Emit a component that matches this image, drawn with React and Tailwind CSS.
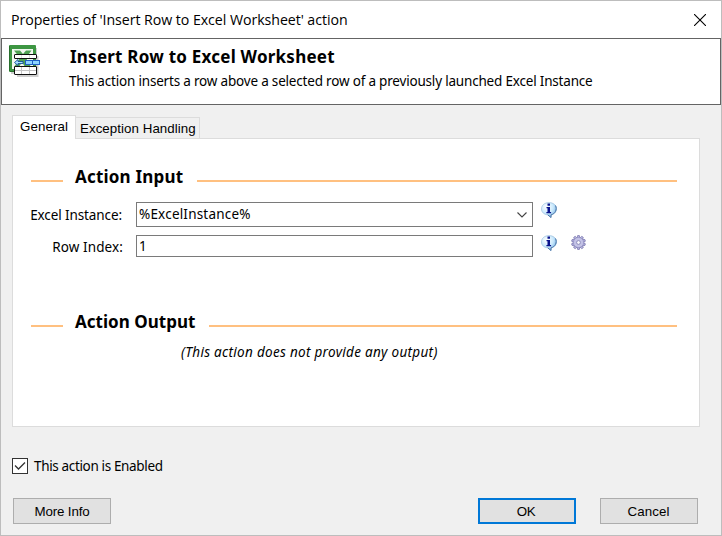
import React from "react";

const body = "block whitespace-pre font-['Noto_Sans',sans-serif] text-[13.5px] leading-[18px] ";
const ui = "block whitespace-pre font-['Liberation_Sans',Arial,sans-serif] text-[13.33px] leading-[16px] ";
const head = "block whitespace-pre font-['Noto_Sans',sans-serif] font-bold text-[17px] leading-[22px] ";

function ExcelIcon() {
  return (
    <svg width="34" height="34" viewBox="0 0 34 34" className="block">
      <path d="M28 3v8H29.500V32H8V29H2V27H27V3z" fill="#888" opacity=".4" />
      <rect width="27" height="27" rx="1" fill="#3d9642" />
      <path d="M0 1h1v25H0zM1 26h26v1H1z" fill="#286f2c" />
      <path d="M3 4h21v20H3z" fill="#f1f8f0" />
      <path d="M5 5.500h6l3 3.500 3-3.500h5.500L17 13l5 9h-6l-3-5-3 5H5l6-9z" fill="#4fa153" />
      <rect x="5.500" y="9.500" width="22" height="4" rx=".5" fill="#fff" stroke="#111" />
      <path d="M12.500 10v3M20.500 10v3" stroke="#ddd" />
      <rect x="5.500" y="21.500" width="22" height="8" rx=".5" fill="#fff" stroke="#111" />
      <path d="M6 25.500h21M12.500 22v7M20.500 22v7" stroke="#c4c4c4" />
      <path d="M5.500 17.500l3.500-3v2h5v2H9v2z" fill="#a8e2ff" stroke="#164f9d" strokeWidth=".9" />
      <rect x="16.500" y="15.500" width="14" height="4" fill="#8dd4ff" stroke="#1f5fc4" />
      <path d="M23.500 16v3" stroke="#1f5fc4" />
    </svg>
  );
}

function InfoIcon() {
  return (
    <svg width="17" height="17" viewBox="0 0 17 17" className="block">
      <defs>
        <radialGradient id="bubble" cx=".35" cy=".3" r=".8">
          <stop offset="0" stopColor="#fff" />
          <stop offset=".55" stopColor="#c9e8fc" />
          <stop offset="1" stopColor="#68a8e0" />
        </radialGradient>
      </defs>
      <path d="M8 .6c4.300 0 7.500 2.600 7.500 6.200 0 3.200-2.200 5.400-5.500 6v2.600l-3.200-2.500C3 12.500.5 10.200.5 6.900.5 3.200 3.700.6 8 .6z" fill="url(#bubble)" stroke="#9dc0dd" strokeWidth=".7" />
      <path d="M14.500 3.500c2 4-.5 8.500-4.500 9.400v2.600l-3.200-2.600" fill="none" stroke="#4b76a8" />
      <path d="M6.500 1.500h2.500v2.200H6.500zM5.500 5H9v5h1.100v1.300H5.400V10h1.100V6.300h-1z" fill="#08128c" />
    </svg>
  );
}

const teeth = [0, 36, 72, 108, 144, 180, 216, 252, 288, 324];

function GearIcon() {
  return (
    <svg width="16" height="16" viewBox="0 0 16 16" className="block">
      {teeth.map((angle) => (
        <path key={angle} d="M6.600.6h1.800l.5 2.400H6.100z" fill="#bdbbe2" stroke="#7875ae" strokeWidth=".8" transform={`rotate(${angle} 7.500 7.500)`} />
      ))}
      <circle cx="7.500" cy="7.500" r="5.100" fill="#c3c2e6" stroke="#918fc2" strokeWidth=".6" />
      <circle cx="7.500" cy="7.500" r="1.900" fill="#fafaff" stroke="#8583b5" strokeWidth=".9" />
    </svg>
  );
}

function Section({ title, className }) {
  return (
    <div className="flex h-5 items-start">
      <div className="mt-[14px] h-0.5 w-8 bg-[#ffc080]" />
      <h2 className={head + "ml-3 " + className}>{title}</h2>
      <div className="mt-[14px] h-0.5 flex-1 bg-[#ffc080]" />
    </div>
  );
}

export default function App() {
  return (
    <div className="flex h-[536px] w-[722px] flex-col border border-[#bdbdbd] bg-[#f0f0f0] text-black">
      <header className="flex h-[37px] shrink-0 items-center justify-between bg-white pr-[15px] pl-[10px]">
        <span className="font-['Open_Sans',sans-serif] text-[14.2px] tracking-[-0.06px] whitespace-pre">Properties of 'Insert Row to Excel Worksheet' action</span>
        <svg width="12" height="12" viewBox="0 0 12 12"><path d="M0 0l12 12M12 0L0 12" stroke="#000" strokeWidth="1.100" /></svg>
      </header>
      <div className="flex h-[67px] shrink-0 border border-[#646464] bg-white pl-[7px]">
        <div className="w-[60px] pt-[6px]"><ExcelIcon /></div>
        <div className="pt-[7px]">
          <h1 className={head + "pl-px tracking-[0.23px]"}>Insert Row to Excel Worksheet</h1>
          <p className={body + "mt-1 tracking-[-0.19px]"}>This action inserts a row above a selected row of a previously launched Excel Instance</p>
        </div>
      </div>

      <div className="mt-[10px] ml-[11px] flex h-[23px] items-end">
        <div className="z-10 -mb-px h-6 w-16 border border-b-0 border-[#dcdcdc] bg-white pt-[3px] pl-[7px]">
          <span className={ui + "tracking-[0.1px]"}>General</span>
        </div>
        <div className="h-[21px] w-[124px] border border-b-0 border-l-0 border-[#dcdcdc] pt-[3px] pl-1">
          <span className={ui + "tracking-[0.05px]"}>Exception Handling</span>
        </div>
      </div>

      <main className="ml-[11px] h-[289px] w-[688px] shrink-0 border border-[#dcdcdc] bg-white pt-[27px] pr-[22px] pl-[18px]">
        <Section title="Action Input" className="w-[122px] tracking-[0.2px]" />
        <div className="mt-4 flex h-[25px]">
          <label className={body + "mt-1 -ml-1 w-24 shrink-0 pr-px text-right tracking-[-0.1px]"}>Excel Instance:</label>
          <div className="ml-[13px] flex h-[25px] w-[397px] items-center justify-between border border-[#7a7a7a] pr-[5px] pb-[2px] pl-0.5">
            <span className={body + "tracking-[0.2px]"}>%ExcelInstance%</span>
            <svg width="10" height="6" viewBox="0 0 10 6" className="mt-0.5"><path d="M.5.5L5 5 9.500.5" fill="none" stroke="#444" strokeWidth="1.100" /></svg>
          </div>
          <div className="ml-2"><InfoIcon /></div>
        </div>
        <div className="mt-2 flex h-[22px]">
          <label className={body + "mt-[3px] w-[92px] shrink-0 text-right tracking-[0.1px]"}>Row Index:</label>
          <div className="ml-[13px] h-[22px] w-[397px] border border-[#7a7a7a] pt-px pl-0.5">
            <span className={body}>1</span>
          </div>
          <div className="ml-2"><InfoIcon /></div>
          <div className="ml-[13px]"><GearIcon /></div>
        </div>
        <div className="mt-[54px]">
          <Section title="Action Output" className="w-[134px] tracking-[0.03px]" />
        </div>
        <p className={body + "mt-3 ml-[150px] italic tracking-[0.3px]"}>(This action does not provide any output)</p>
      </main>

      <div className="mt-[31px] ml-[11px] flex h-4 items-center">
        <div className="flex size-4 items-center justify-center border border-[#333] bg-white">
          <svg width="12" height="10" viewBox="0 0 12 10"><path d="M1 4.500l3.500 3.500L11 1.500" fill="none" stroke="#333" strokeWidth="1.300" /></svg>
        </div>
        <span className={body + "ml-[6px] tracking-[-0.35px]"}>This action is Enabled</span>
      </div>

      <footer className="mt-6 flex h-[26px] pl-3">
        <button className={ui + "h-[26px] w-[98px] border border-[#adadad] bg-[#e1e1e1] pt-px tracking-[-0.15px]"}>More Info</button>
        <button className={ui + "ml-[367px] h-[26px] w-[98px] border-2 border-[#0078d7] bg-[#e1e1e1] pt-px pr-0.5 tracking-[-0.3px]"}>OK</button>
        <button className={ui + "ml-6 h-[26px] w-[98px] border border-[#adadad] bg-[#e1e1e1] pt-px pr-px tracking-[0.1px]"}>Cancel</button>
      </footer>
    </div>
  );
}
